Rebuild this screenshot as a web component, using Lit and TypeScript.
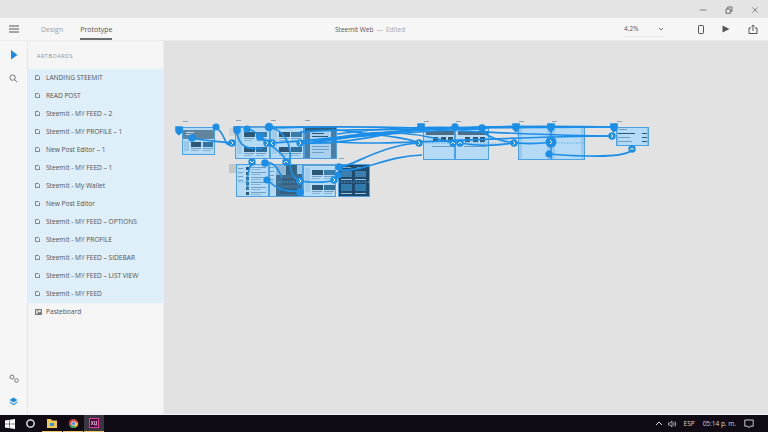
import { LitElement, html, css, svg } from "lit";
import { customElement } from "lit/decorators.js";

const ROWS = [
  "LANDING STEEMIT", "READ POST", "Steemit - MY FEED – 2", "Steemit - MY PROFILE – 1",
  "New Post Editor – 1", "Steemit - MY FEED – 1", "Steemit - My Wallet", "New Post Editor",
  "Steemit - MY FEED – OPTIONS", "Steemit - MY PROFILE", "Steemit - MY FEED – SIDEBAR",
  "Steemit - MY FEED – LIST VIEW", "Steemit - MY FEED",
];

type Board = [number, number, number, number, string];
const BOARDS: Board[] = [
  [182, 127, 33, 28, "landing"], [235, 126, 35, 33, "feed"], [270, 126, 34, 33, "feed"], [304, 126, 33, 33, "post"],
  [236, 164, 33, 33, "list"], [269, 164, 34, 33, "side"], [303, 164, 33, 33, "feed"], [338, 164, 32, 33, "dark"],
  [423, 127, 32, 33, "top"], [455, 127, 34, 33, "top"], [518, 127, 33, 33, "plain"], [551, 127, 34, 33, "plain"],
  [616, 127, 33, 19, "menu"],
];

const WIRES = [
  "M192 138C205 141 218 141 232 143", "M216 128C226 132 224 150 232 143",
  "M237 131C238 148 250 150 262 148", "M247 129C258 130 262 142 268 143", "M262 138C272 148 278 148 286 160",
  "M269 128C280 128 292 140 290 160C290 176 296 180 300 181", "M252 162C248 170 246 178 248 190",
  "M268 180C280 194 294 190 300 192", "M265 163C272 160 278 168 282 178", "M300 181C315 183 325 183 334 180",
  "M270 128C320 126 380 127 423 128", "M300 132C350 128 400 131 455 128", "M272 143C330 140 400 131 482 129",
  "M300 143C350 145 390 132 421 128", "M304 141C370 133 430 127 516 127", "M308 143C380 130 470 125 551 127",
  "M320 142C400 127 520 125 614 127", "M337 142C390 146 480 137 612 136", "M337 134C380 128 420 126 482 128",
  "M337 130C380 135 410 138 419 143", "M337 138C380 128 420 133 453 143", "M339 167C350 168 380 145 419 143",
  "M339 170C365 172 385 156 422 155", "M460 143C475 146 495 146 514 143", "M482 130C490 142 525 146 551 142",
  "M549 154C600 158 630 156 632 149", "M420 128L614 127", "M460 131C490 132 560 136 612 136",
];

const DOTS: [number, number, number][] = [
  [192, 138, 3.8], [216, 127, 3.6], [247, 129, 3.6], [269, 127, 4.3], [260, 137, 3.8],
  [265, 163, 3.8], [267, 180, 3.6], [300, 192, 3.8], [339, 167, 3.8], [338, 175, 3.6],
  [455, 127, 3.8], [482, 128, 3.8], [549, 154, 3.6],
];
/* teardrop handles: the flow-start pins at the artboard corners */
const DROPS: [number, number][] = [[179, 130], [237, 130], [421, 127], [516, 127], [551, 127], [614, 127]];

const CHEVRONS: [number, number, string, number][] = [
  [232, 143, "r", 3.7], [267, 143, "r", 3.7], [272, 143, "l", 3.7], [300, 143, "r", 3.7], [252, 162, "d", 3.7],
  [286, 162, "u", 3.7], [300, 181, "r", 3.7], [334, 180, "r", 3.7], [419, 143, "r", 3.7], [453, 143, "u", 3.7],
  [460, 143, "u", 3.7], [514, 143, "r", 3.7], [551, 142, "r", 5.5], [612, 136, "r", 3.7], [632, 149, "u", 3.7],
];

const CHEV: Record<string, string> = { r: "M-1 -2L1 0L-1 2", l: "M1 -2L-1 0L1 2", d: "M-2 -1L0 1L2 -1", u: "M-2 1L0 -1L2 1" };

function boardContent([x, y, w, h, kind]: Board) {
  const r = (rx: number, ry: number, rw: number, rh: number, fill: string) =>
    svg`<rect x=${x + rx} y=${y + ry} width=${rw} height=${rh} fill=${fill}></rect>`;
  const dark = "#2c5878", mid = "#6f9fc2", lite = "#85b4d6";
  const lines = (dy: number) => svg`${r(9, dy, 10, 1, mid)}${r(21, dy, 10, 1, mid)}${r(9, dy + 2, 8, 1, lite)}${r(21, dy + 2, 8, 1, lite)}`;
  if (kind === "landing") return svg`
    ${r(1, 3, 31, 9, "#62859e")}${r(4, 5, 8, 1, "#bcd6e8")}${r(4, 7, 6, 1, "#bcd6e8")}
    ${r(9, 15, 10, 5, dark)}${r(21, 15, 10, 5, "#35739e")}${r(2, 14, 5, 10, "#9cc6e6")}${lines(21)}`;
  if (kind === "feed") return svg`
    ${r(0, 1, w, 1, "#6d9dc2")}${r(2, 4, 5, 24, "#a2cbea")}
    ${r(9, 6, 11, 5, dark)}${r(21, 6, 11, 5, "#3a7dab")}${lines(12)}
    ${r(9, 21, 11, 5, dark)}${r(21, 21, 11, 5, "#2e6f9b")}${lines(27)}`;
  if (kind === "post") return svg`
    ${r(0, 1, w, 4, "#2e5f83")}${r(0, 5, 6, 28, "#4c7da2")}${r(27, 5, 6, 28, "#4c7da2")}${r(6, 5, 21, 28, "#a9d1ef")}
    ${r(8, 7, 12, 1, dark)}${r(8, 10, 16, 1, dark)}${r(8, 13, 9, 1, dark)}${r(6, 17, 21, 1, "#7fb0d4")}
    ${r(8, 20, 17, 1, mid)}${r(8, 23, 17, 1, mid)}${r(8, 26, 12, 1, mid)}`;
  if (kind === "list") return svg`
    ${[3, 8, 13, 18, 23, 28].map((d) => svg`${r(10, d, 3, 3, dark)}${r(15, d, 15, 1, mid)}${r(15, d + 2, 10, 1, lite)}`)}
    ${r(2, 4, 5, 1, mid)}${r(2, 8, 5, 1, mid)}${r(2, 12, 5, 1, mid)}${r(2, 16, 5, 1, mid)}`;
  if (kind === "side") return svg`
    ${r(7, 0, 27, 33, "#3f6e93")}${r(7, 1, 10, 10, "#8fb7d6")}${r(17, 1, 11, 10, "#36637f")}${r(28, 0, 6, 10, "#9cc6e6")}
    ${r(13, 14, 15, 7, "#35607f")}${r(11, 24, 17, 6, "#35607f")}
    ${r(1, 3, 4, 1, mid)}${r(1, 7, 4, 1, mid)}${r(1, 11, 4, 1, mid)}${r(1, 15, 4, 1, mid)}`;
  if (kind === "dark") return svg`
    ${r(0, 0, w, h, "#1f4a6b")}${r(3, 7, 11, 6, "#3c7fae")}${r(17, 7, 11, 6, "#3c7fae")}${r(5, 3, 8, 1, "#7fa9c7")}${r(19, 3, 8, 1, "#7fa9c7")}
    ${r(3, 15, 11, 1, "#9cc4e0")}${r(17, 15, 11, 1, "#9cc4e0")}${r(3, 20, 11, 7, "#2f7bad")}${r(17, 20, 11, 7, "#2f7bad")}${r(3, 29, 11, 1, "#9cc4e0")}${r(17, 29, 11, 1, "#9cc4e0")}`;
  if (kind === "top") return svg`
    ${r(0, 1, w, 1, "#7fb0d4")}${r(3, 4, w - 4, 4, "#4d6f85")}${r(10, 10, 5, 5, "#37576c")}
    ${r(18, 10, 5, 5, "#37576c")}${r(25, 10, 5, 5, "#37576c")}${r(9, 19, 22, 1, mid)}`;
  if (kind === "menu") return svg`
    ${r(3, 2, 8, 1, mid)}${r(2, 6, 17, 1, dark)}${r(26, 6, 5, 1, dark)}${r(2, 10, 12, 1, mid)}${r(26, 10, 5, 1, dark)}
    ${r(2, 14, 14, 1, mid)}${r(26, 14, 5, 1, dark)}${r(0, 0, 2, h, "#8dbde0")}${r(w - 2, 0, 2, h, "#8dbde0")}`;
  return svg`${r(0, 0, 4, h, "#9cc8ea")}${r(w - 4, 0, 4, h, "#9cc8ea")}`;
}

@customElement("app-root")
export class AppRoot extends LitElement {
  static styles = css`
    :host { display: flex; flex-direction: column; width: 768px; height: 432px; overflow: hidden;
      font-family: "Open Sans", "Noto Sans", sans-serif; color: #4b4b4b; background: #e3e3e3; }
    svg { display: block; }
    .title { height: 18px; flex: none; background: #e4e4e4; display: flex; justify-content: flex-end; align-items: center; padding-right: 9px; gap: 18px; padding-top: 1px; box-sizing: border-box; }
    .title svg { width: 8px; height: 8px; }
    .toolbar { height: 23px; flex: none; background: #f6f6f6; display: grid; grid-template-columns: 335px auto 1fr; align-items: stretch; border-bottom: 1px solid #ebebeb; box-sizing: border-box; }
    .tleft { display: flex; align-items: stretch; }
    .burger { width: 28px; display: flex; align-items: center; justify-content: center; }
    .tab { font-size: 7px; display: flex; align-items: center; color: #a0a0a0; margin-left: 13px; margin-right: 4px; border-bottom: 2px solid transparent; box-sizing: border-box; padding-top: 2px; }
    .tab.on { color: #555; border-bottom-color: #6e6e6e; }
    .doc { font-size: 6.5px; display: flex; align-items: center; gap: 3px; color: #555; }
    .doc i { font-style: normal; color: #a8a8a8; }
    .tright { display: flex; justify-content: flex-end; align-items: center; padding-right: 10px; }
    .zoom { width: 40px; margin-right: 34px; display: flex; justify-content: space-between; align-items: center; font-size: 6.5px; color: #555; border-bottom: 1px solid #e6e6e6; height: 14px; }
    .tools { display: flex; gap: 18px; align-items: center; }
    .main { flex: 1; display: flex; min-height: 0; }
    .rail { width: 28px; flex: none; background: #f6f6f6; border-right: 1px solid #e8e8e8; box-sizing: border-box; display: flex; flex-direction: column; align-items: center; padding: 9px 0 8px; gap: 14px; }
    .rail .spacer { flex: 1; }
    .panel { width: 136px; flex: none; background: #f5f5f5; border-right: 1px solid #ececec; box-sizing: border-box; display: flex; flex-direction: column; }
    .head { height: 28px; flex: none; font-size: 5.5px; letter-spacing: .5px; color: #8e8e8e; display: flex; align-items: center; padding-left: 9px; padding-top: 2px; box-sizing: border-box; }
    .list { background: #dfeffa; display: flex; flex-direction: column; }
    .row { height: 18px; display: flex; align-items: center; gap: 6px; padding-left: 7px; padding-bottom: 1px; box-sizing: border-box; font-size: 6.6px; color: #505050; white-space: nowrap; }
    .row.board { gap: 4px; }
    .canvas { flex: 1; background: #e2e2e2; position: relative; }
    .art { position: absolute; left: -164px; top: -41px; width: 768px; height: 432px; filter: blur(.3px); }
    .task { height: 18px; flex: none; background: #100b15; display: flex; align-items: center; color: #d8d8d8; font-size: 6.5px; border-top: 1px solid #f2f2f2; box-sizing: border-box; }
    .start { width: 20px; display: flex; justify-content: center; }
    .app { width: 20px; height: 17px; margin-right: 1px; display: flex; align-items: center; justify-content: center; box-sizing: border-box; border-bottom: 1px solid #e9c46a; }
    .app.active { background: #3a3640; }
    .app.cortana { width: 21px; border: 0; }
    .tray { margin-left: auto; display: flex; align-items: center; padding-right: 14px; }
    .tray .vol { margin-left: 5px; }
    .tray .esp { margin-left: 7px; }
    .tray .clock { margin-left: 8px; }
    .tray .note { margin-left: 8px; }
  `;

  render() {
    return html`
      <div class="title">
        <svg viewBox="0 0 12 12"><path d="M1 6H11" stroke="#777" stroke-width="1.4"/></svg>
        <svg viewBox="0 0 12 12" fill="none" stroke="#666" stroke-width="1.4"><path d="M1.5 4.5H8V11H1.5ZM4 4.5V1.5H10.5V8H8"/></svg>
        <svg viewBox="0 0 12 12"><path d="M2 2L10 10M10 2L2 10" stroke="#777" stroke-width="1.3"/></svg>
      </div>
      <div class="toolbar">
        <div class="tleft">
          <div class="burger"><svg width="10" height="8" viewBox="0 0 10 8"><path d="M0 1H10M0 4H10M0 7H10" stroke="#555" stroke-width="1.1"/></svg></div>
          <div class="tab">Design</div>
          <div class="tab on">Prototype</div>
        </div>
        <div class="doc">Steemit Web <i>—</i> <i>Edited</i></div>
        <div class="tright">
          <div class="zoom"><span>4.2%</span><svg width="6" height="4" viewBox="0 0 6 4"><path d="M1 1L3 3L5 1" fill="none" stroke="#777"/></svg></div>
          <div class="tools">
            <svg width="6" height="9" viewBox="0 0 6 9" fill="none" stroke="#555"><rect x=".5" y=".5" width="5" height="8" rx=".7"/></svg>
            <svg width="8" height="8" viewBox="0 0 8 8"><path d="M.5 .5L7.5 4L.5 7.5Z" fill="#555"/></svg>
            <svg width="10" height="10" viewBox="0 0 10 10" fill="none" stroke="#555"><path d="M3 4H1V9.5H9V4H7M5 7V1M3.5 2.5L5 1L6.5 2.5"/></svg>
          </div>
        </div>
      </div>
      <div class="main">
        <div class="rail">
          <svg width="8" height="10" viewBox="0 0 8 10"><path d="M1 0L7.5 5L1 9.5Z" fill="#1c8ae0"/></svg>
          <svg width="9" height="9" viewBox="0 0 10 10" fill="none" stroke="#666"><circle cx="4" cy="4" r="3"/><path d="M6.2 6.2L9 9"/></svg>
          <div class="spacer"></div>
          <svg width="10" height="9" viewBox="0 0 10 9" fill="none" stroke="#777"><circle cx="3" cy="3" r="2"/><circle cx="7.5" cy="6.5" r="1.8"/></svg>
          <svg width="9" height="9" viewBox="0 0 9 9" fill="#1c8ae0"><path d="M4.5 .5L8.5 3L4.5 5.5L.5 3Z"/><path d="M1.2 4.8L4.5 6.9L7.8 4.8L8.5 5.4L4.5 8.2L.5 5.4Z"/></svg>
        </div>
        <div class="panel">
          <div class="head">ARTBOARDS</div>
          <div class="list">
            ${ROWS.map((t) => html`<div class="row">
              <svg width="5" height="5" viewBox="0 0 5 5" fill="none" stroke="#6b6b6b" stroke-width=".8"><path d="M.5 .5H3.3L4.5 1.7V4.5H.5Z"/></svg>${t}</div>`)}
          </div>
          <div class="row board">
            <svg width="7" height="6" viewBox="0 0 7 6"><rect width="7" height="6" rx=".6" fill="#777"/><rect x="1.2" y="1.2" width="1.4" height="3.6" fill="#f5f5f5"/><rect x="3.4" y="1.2" width="2.4" height="2" fill="#f5f5f5"/></svg>
            Pasteboard
          </div>
        </div>
        <div class="canvas">
          <svg class="art" viewBox="0 0 768 432">
            <rect x="229" y="164" width="8" height="9" fill="#c6c6c6"></rect>
            <rect x="229" y="128" width="7" height="8" fill="#d2d2d2"></rect>
            <rect x="303" y="128" width="2" height="8" fill="#c6c6c6"></rect>
            <rect x="517" y="128" width="3" height="8" fill="#c6c6c6"></rect>
            ${BOARDS.map(([x, y]) => svg`<rect x=${x + 1} y=${y - 6} width="5" height="1" fill="#93a3b0"></rect>`)}
            ${BOARDS.map((b) => svg`
              <rect x=${b[0]} y=${b[1]} width=${b[2]} height=${b[3]} fill="#b5daf6"></rect>
              ${boardContent(b)}
              <rect x=${b[0] + 0.5} y=${b[1] + 0.5} width=${b[2] - 1} height=${b[3] - 1} fill="none" stroke="#49a2e6"></rect>`)}
            <path d="M423 143H585M236 182H370" fill="none" stroke="#5aaeea" stroke-width="1" stroke-dasharray="1.5 1.5"></path>
            <g fill="none" stroke="#1b8ee8" stroke-width="1.7">
              ${WIRES.map((d) => svg`<path d=${d}></path>`)}
            </g>
            <g fill="#1b8ee8">
              ${DOTS.map(([x, y, r]) => svg`<circle cx=${x} cy=${y} r=${r}></circle>`)}
              ${DROPS.map(([x, y]) => svg`<path transform="translate(${x} ${y})" d="M-3.8 -3.8H3.8V0C3.8 3 1.5 4 0 5.5C-1.5 4 -3.8 3 -3.8 0Z"></path>`)}
              ${CHEVRONS.map(([x, y, , r]) => svg`<circle cx=${x} cy=${y} r=${r}></circle>`)}
            </g>
            <g fill="none" stroke="#fff" stroke-width="1">
              ${CHEVRONS.map(([x, y, k]) => svg`<path transform="translate(${x} ${y})" d=${CHEV[k]}></path>`)}
            </g>
          </svg>
        </div>
      </div>
      <div class="task">
        <div class="start"><svg width="10" height="10" viewBox="0 0 10 10" fill="#fff"><path d="M0 1.5L4.5 .8V4.7H0ZM5 .7L10 0V4.7H5ZM0 5.2H4.5V9.2L0 8.5ZM5 5.2H10V10L5 9.3Z"/></svg></div>
        <div class="app cortana"><svg width="9" height="9" viewBox="0 0 9 9" fill="none" stroke="#fff" stroke-width="1.3"><circle cx="4.5" cy="4.5" r="3.7"/></svg></div>
        <div class="app"><svg width="10" height="9" viewBox="0 0 10 9"><path d="M0 0H4L5 1.5H10V9H0Z" fill="#f2c94c"/><rect x="3" y="4" width="4" height="3" fill="#3a8fd6"/></svg></div>
        <div class="app"><svg width="9" height="9" viewBox="0 0 9 9"><circle cx="4.5" cy="4.5" r="4.5" fill="#d8483b"/><path d="M4.5 4.5L.6 6.8A4.5 4.5 0 0 0 6.5 8.5Z" fill="#3aa757"/><path d="M4.5 4.5L6.5 8.5A4.5 4.5 0 0 0 8.8 3Z" fill="#f4c20d"/><circle cx="4.5" cy="4.5" r="2" fill="#4b8bf5" stroke="#fff" stroke-width=".6"/></svg></div>
        <div class="app active"><svg width="10" height="10" viewBox="0 0 10 10"><rect x=".5" y=".5" width="9" height="9" fill="#45083a" stroke="#e0389d"/><path d="M2.3 3L4.4 7M4.4 3L2.3 7M5.7 3V7H7.6V3" fill="none" stroke="#f7c6e3" stroke-width=".8"/></svg></div>
        <div class="tray">
          <svg width="8" height="5" viewBox="0 0 8 5"><path d="M1 4L4 1L7 4" fill="none" stroke="#ddd"/></svg>
          <svg class="vol" width="9" height="8" viewBox="0 0 9 8" fill="none" stroke="#ccc" stroke-width=".8"><path d="M.5 3H2L4 1V7L2 5H.5ZM5.5 2.5Q6.5 4 5.5 5.5M7 1.5Q8.5 4 7 6.5"/></svg>
          <span class="esp">ESP</span>
          <span class="clock">05:14 p. m.</span>
          <svg class="note" width="10" height="10" viewBox="0 0 10 10" fill="none" stroke="#ddd" stroke-width=".9"><path d="M.8 1H9.2V7.2H6.2L5 8.8L3.8 7.2H.8Z"/></svg>
        </div>
      </div>
    `;
  }
}
